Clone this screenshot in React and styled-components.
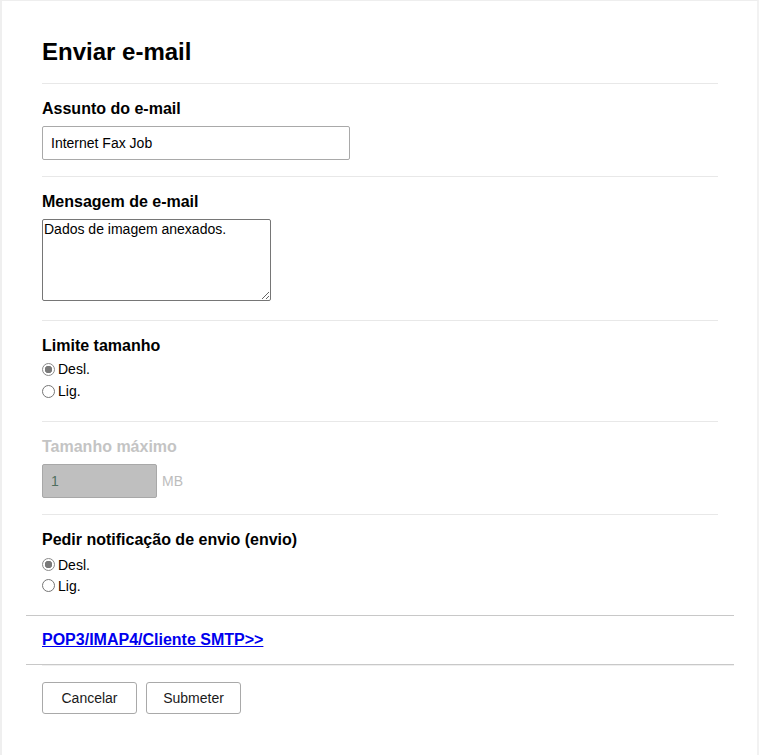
import React from 'react';
import styled, { createGlobalStyle } from 'styled-components';

const GlobalStyle = createGlobalStyle`
  html, body {
    margin: 0;
    padding: 0;
    background: #ffffff;
    font-family: "Liberation Sans", Arial, sans-serif;
    color: #000;
  }
`;

const Page = styled.div`
  box-sizing: border-box;
  width: 759px;
  min-height: 755px;
  background: #fff;
  border-top: 1px solid #eeeeee;
  border-left: 2px solid #efefef;
  border-right: 2px solid #f2f2f2;
  padding: 0 23px 40px 24px;
`;

const Content = styled.div`
  padding: 0 16px;
`;

const Title = styled.h1`
  margin: 0;
  padding: 37px 0 17px;
  font-size: 24px;
  line-height: 28px;
  font-weight: bold;
  border-bottom: 1px solid #e8e8e8;
`;

const Section = styled.div`
  padding: 16px 0 ${p => p.$pb || 16}px;
  border-bottom: ${p => (p.$last ? 'none' : '1px solid #e8e8e8')};
`;

const Label = styled.div`
  font-size: 16px;
  line-height: 18px;
  font-weight: bold;
  color: ${p => (p.$disabled ? '#c4c4c4' : '#000')};
  margin-bottom: ${p => p.$mb ?? 8}px;
`;

const TextInput = styled.input`
  display: block;
  box-sizing: border-box;
  width: ${p => p.$w}px;
  height: 34px;
  margin: 0;
  padding: 0 8px;
  border: 1px solid ${p => (p.disabled ? '#a8a8a8' : '#a9a9a9')};
  border-radius: 2px;
  background: ${p => (p.disabled ? '#bfbfbf' : '#fff')};
  color: ${p => (p.disabled ? '#4f6f5f' : '#000')};
  font-family: "Liberation Sans", Arial, sans-serif;
  font-size: 14px;
  outline: none;
`;

const TextArea = styled.textarea`
  display: block;
  box-sizing: border-box;
  width: 229px;
  height: 82px;
  margin: 0;
  padding: 1px;
  border: 1px solid #767676;
  border-radius: 2px;
  font-family: "Liberation Sans", Arial, sans-serif;
  font-size: 14px;
  line-height: 16px;
  color: #000;
  resize: both;
`;

const UnitRow = styled.div`
  display: flex;
  align-items: center;
  gap: 5px;
`;

const Unit = styled.span`
  font-size: 14px;
  color: #bdbdbd;
`;

const RadioRow = styled.label`
  display: flex;
  align-items: center;
  height: ${p => p.$h || 22}px;
  font-size: 14px;
  color: #000;
`;

const Radio = styled.input.attrs({ type: 'radio' })`
  appearance: none;
  box-sizing: border-box;
  width: 13px;
  height: 13px;
  margin: 0 3px 0 0;
  border-radius: 50%;
  border: 1px solid #767676;
  background: #fff;

  &:checked {
    border-color: #8a8a8a;
    background: radial-gradient(circle, #7a7a7a 0 3.5px, #fff 4px);
  }
`;

const Divider = styled.div`
  height: 1px;
  background: #c8c8c8;
`;

const LinkRow = styled.div`
  padding: 15px 16px 15px;
`;

const MoreLink = styled.a`
  font-size: 16px;
  line-height: 18px;
  font-weight: bold;
  color: #0000ee;
  text-decoration: underline;
`;

const Buttons = styled.div`
  display: flex;
  gap: 9px;
  margin-left: 16px;
  padding-top: 16px;
  border-top: 1px solid #efefef;
`;

const Button = styled.button`
  box-sizing: border-box;
  width: 95px;
  height: 32px;
  background: #fff;
  border: 1px solid #a9a9a9;
  border-radius: 3px;
  font-family: "Liberation Sans", Arial, sans-serif;
  font-size: 14px;
  color: #1a1a1a;
`;

const RadioGroup = ({ name, rows = [22, 22] }) => (
  <>
    <RadioRow $h={rows[0]}>
      <Radio name={name} defaultChecked />
      Desl.
    </RadioRow>
    <RadioRow $h={rows[1]}>
      <Radio name={name} />
      Lig.
    </RadioRow>
  </>
);

export default function App() {
  return (
    <Page>
      <GlobalStyle />
      <Content>
        <Title>Enviar e-mail</Title>

        <Section>
          <Label>Assunto do e-mail</Label>
          <TextInput $w={308} defaultValue="Internet Fax Job" />
        </Section>

        <Section $pb={19}>
          <Label>Mensagem de e-mail</Label>
          <TextArea defaultValue="Dados de imagem anexados." />
        </Section>

        <Section $pb={19}>
          <Label $mb={3}>Limite tamanho</Label>
          <RadioGroup name="limite" />
        </Section>

        <Section>
          <Label $disabled>Tamanho máximo</Label>
          <UnitRow>
            <TextInput $w={115} disabled defaultValue="1" />
            <Unit>MB</Unit>
          </UnitRow>
        </Section>

        <Section $last $pb={19}>
          <Label $mb={5}>Pedir notificação de envio (envio)</Label>
          <RadioGroup name="notif" rows={[21, 21]} />
        </Section>
      </Content>

      <Divider />
      <LinkRow>
        <MoreLink href="#">POP3/IMAP4/Cliente SMTP&gt;&gt;</MoreLink>
      </LinkRow>
      <Divider />

      <Buttons>
        <Button>Cancelar</Button>
        <Button>Submeter</Button>
      </Buttons>
    </Page>
  );
}
